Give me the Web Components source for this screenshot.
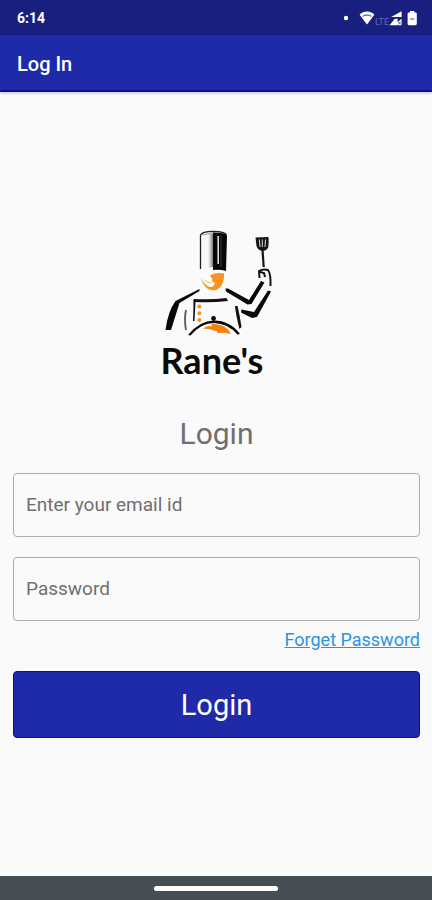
<!DOCTYPE html>
<html lang="en">
<head>
<meta charset="utf-8">
<meta name="viewport" content="width=device-width, initial-scale=1">
<title>Log In</title>
<style>
  html, body {
    margin: 0;
    height: 100%;
  }

  body {
    font-family: Roboto, "Liberation Sans", sans-serif;
    background: #fafafa;
    --primary: #1f2aa8;
    --primary-dark: #191f7e;
    --muted: #6f6f6f;
  }
</style>
</head>
<body>
<login-page></login-page>

<script>
class StatusBar extends HTMLElement {
  constructor() {
    super();
    this.attachShadow({ mode: 'open' });
    this.shadowRoot.innerHTML = `<style>
      :host {
        display: flex;
        align-items: center;
        justify-content: space-between;
        height: 35px;
        padding: 0 13px 0 17px;
        background: var(--primary-dark);
        color: #fff;
        font-size: 14px;
        font-weight: 700;
      }

      .icons {
        display: flex;
        align-items: center;
      }

      .lte {
        align-self: flex-end;
        font-size: 9px;
        font-weight: 400;
        line-height: 8px;
        color: #6468ad;
      }

      svg {
        display: block;
        fill: #fff;
      }
    </style>
    <span><slot></slot></span>
    <div class="icons">
      <svg width="16" height="16" viewBox="0 0 16 16"><circle cx="3" cy="8" r="2.2"/></svg>
      <svg width="16" height="16" viewBox="0 0 16 16">
        <path d="M0.6 4.8C4.8 0.4 11.2 0.4 15.4 4.8L8 14.4z"/>
        <path d="M3.5 6.4C6 4.6 10 4.6 12.5 6.4" fill="none" stroke="#191f7e" stroke-width="0.9"/>
      </svg>
      <span class="lte">LTE</span>
      <svg width="16" height="16" viewBox="0 0 16 16">
        <path d="M12.600 1.200V7H2.200z"/>
        <path d="M5.800 8.800H8.600V11.800L10.400 10.800L12.600 8.600V15.200H0.600z"/>
        <path d="M9 11.500L12 14.500M12 11.500L9 14.500" stroke="#191f7e" stroke-width="0.7" fill="none"/>
      </svg>
      <svg width="14" height="16" viewBox="0 0 14 16">
        <path d="M5 1h4.4v1.600h1.200q1.200 0 1.200 1.200v10q0 1.400-1.400 1.400H4q-1.400 0-1.400-1.400v-10q0-1.200 1.200-1.200H5z"/>
        <path d="M5 9h4.400" stroke="#a5a8d0" stroke-width="2.200"/>
      </svg>
    </div>`;
  }
}
customElements.define('status-bar', StatusBar);


class AppBar extends HTMLElement {
  constructor() {
    super();
    this.attachShadow({ mode: 'open' });
    this.shadowRoot.innerHTML = `<style>
      :host {
        display: flex;
        align-items: center;
        height: 57px;
        padding: 0 17px;
        background: var(--primary);
        box-shadow: inset 0 -2px #0a0f96, 0 1px 3px rgba(0,0,0,0.25);
        color: #fff;
      }

      h1 {
        margin: 0;
        font-size: 20px;
        font-weight: 500;
        line-height: 24px;
      }
    </style>
    <h1><slot></slot></h1>`;
  }
}
customElements.define('app-bar', AppBar);


class BrandLogo extends HTMLElement {
  constructor() {
    super();
    this.attachShadow({ mode: 'open' });
    this.shadowRoot.innerHTML = `<style>
      :host {
        display: block;
        width: 112px;
      }

      svg {
        display: block;
        width: 100%;
      }

      .name {
        color: #0b0b0b;
        font-family: Lato, "Liberation Sans", sans-serif;
        font-size: 36px;
        font-weight: 700;
        line-height: 46px;
        white-space: nowrap;
      }
    </style>
    <svg viewBox="161 229 112 107" aria-hidden="true">
      <defs>
        <linearGradient id="fold">
          <stop offset="0" stop-color="#999" stop-opacity="0"/>
          <stop offset="1" stop-color="#777"/>
        </linearGradient>
      </defs>
      <!-- hat -->
      <path d="M200.5 268V234Q202 230.6 213 230.4Q225 230.6 226.5 234" fill="none" stroke="#222" stroke-width="1.3"/>
      <path d="M202 234Q213 232 214 232" fill="none" stroke="#888" stroke-width="0.8"/>
      <path d="M208 233H213V266L208 267z" fill="url(#fold)"/>
      <path d="M213 231.5Q225 231.5 227 234.5L226 270Q220 268 213 269z" fill="#080808"/>
      <path d="M218.2 235V263" stroke="#ddd" stroke-width="1.6"/>
      <path d="M221 234V266" stroke="#555" stroke-width="0.7"/>
      <!-- face -->
      <path d="M210.5 274Q217 271 224 272.5Q224.5 281 220 286.5Q215 291 208 288Q202.5 284 201 277Q204.5 284 209.5 286Q214 286.5 215 282Q211 281 212.5 277.5Q210 276.5 210.5 274z" fill="#f7931e"/>
      <path d="M205 279Q207 282 211 282" fill="none" stroke="#f9b25c" stroke-width="1"/>
      <!-- spatula and hand -->
      <path d="M255.5 236.5L268.5 236Q269 243 268 247Q266 250 262 250Q257.5 249 256.5 245z" fill="#151515"/>
      <path d="M259.3 238.5L260 246M262.3 238.5V246M265.5 238.5L265 246" stroke="#ddd" stroke-width="1"/>
      <path d="M262.5 249L263.7 266" stroke="#151515" stroke-width="2.2"/>
      <path d="M259.5 277L259 270Q263 267.5 268 269Q271 273 270.5 285M260 271L264 272L265 276" fill="none" stroke="#111" stroke-width="2"/>
      <!-- arms -->
      <path d="M225.5 287.5L228 287.5L249 299L261 280L264.5 281.5L251.500 303L247.500 303.5L226 290.500z" fill="#080808"/>
      <path d="M268 289.5L271 290.5L257 316L252 317L241 311.5L241.5 308.5L254 311z" fill="#080808"/>
      <path d="M199.5 288L199.5 290L179.5 302L171 329H165.5Q168 310 175.5 300z" fill="#080808"/>
      <!-- jacket -->
      <path d="M186 309Q184 318 186 329" fill="none" stroke="#555" stroke-width="1.8"/>
      <path d="M193 320Q193.5 308 193.5 298Q212 299 226.500 297L228 300Q211 302 195.5 301L194.5 320z" fill="#111"/>
      <path d="M235 305L237.5 305Q240 315 241.5 326L239.5 328Q236 315 235 305z" fill="#111"/>
      <g fill="#f7931e">
        <circle cx="199.3" cy="305.5" r="2"/>
        <circle cx="199.3" cy="312.3" r="2"/>
        <circle cx="199.3" cy="319" r="2"/>
      </g>
      <!-- serving dome -->
      <path d="M203 328Q207 323.5 212 325.5Q210 322 215 323Q227 324 231 333Q221 331 217 332.500Q219 330 214 329.5Q208 327 203 328z" fill="#f5820a"/>
      <path d="M188 334Q200 319.5 214 319.5Q230 319.5 240 333L237.5 333.5Q228 322.500 214 322Q201 322 190.500 334.500z" fill="#080808"/>
      <circle cx="213.5" cy="317.5" r="2.4" fill="#080808"/>
    </svg>
    <div class="name"><slot></slot></div>`;
  }
}
customElements.define('brand-logo', BrandLogo);


class TextField extends HTMLElement {
  constructor() {
    super();
    this.attachShadow({ mode: 'open' });
  }

  connectedCallback() {
    const label = this.getAttribute('label');
    const type = this.getAttribute('type') || 'text';
    this.shadowRoot.innerHTML = `<style>
      :host {
        display: grid;
        align-items: center;
      }

      /* label and input share one cell, the label gives way to typed text */
      label, input {
        grid-area: 1 / 1;
      }

      label {
        padding: 0 13px;
        color: var(--muted);
        font-size: 19px;
        line-height: 24px;
        pointer-events: none;
      }

      input {
        box-sizing: border-box;
        width: 100%;
        height: 64px;
        padding: 0 12px;
        border: 1px solid #adadad;
        border-radius: 4px;
        background: transparent;
        color: #222;
        font-family: inherit;
        font-size: 19px;
      }

      input:focus {
        outline: 2px solid var(--primary);
      }

      :host(.filled) label {
        opacity: 0;
      }
    </style>
    <label for="field">${label}</label>
    <input id="field" type="${type}">`;

    this.input = this.shadowRoot.querySelector('input');
    this.input.addEventListener('input', () => {
      this.classList.toggle('filled', this.input.value !== '');
    });
  }
}
customElements.define('text-field', TextField);


class PrimaryButton extends HTMLElement {
  constructor() {
    super();
    this.attachShadow({ mode: 'open' });
    this.shadowRoot.innerHTML = `<style>
      :host {
        display: block;
      }

      button {
        display: block;
        width: 100%;
        height: 67px;
        border: 1px solid #0a0f9c;
        border-radius: 4px;
        background: var(--primary);
        color: #fff;
        font-family: inherit;
        font-size: 29px;
        cursor: pointer;
      }
    </style>
    <button type="button"><slot></slot></button>`;
  }
}
customElements.define('primary-button', PrimaryButton);


class LoginForm extends HTMLElement {
  constructor() {
    super();
    this.attachShadow({ mode: 'open' });
    this.shadowRoot.innerHTML = `<style>
      :host {
        display: block;
        padding: 0 12px 0 13px;
      }

      brand-logo {
        margin: 0 auto;
      }

      h2 {
        margin: 32px 0 20px;
        color: var(--muted);
        font-size: 30px;
        font-weight: 400;
        line-height: 38px;
        text-align: center;
      }

      form {
        display: flex;
        flex-direction: column;
      }

      text-field + text-field {
        margin-top: 20px;
      }

      a {
        align-self: flex-end;
        margin: 8px 0 20px;
        color: #2c93e4;
        font-size: 18px;
        line-height: 22px;
      }
    </style>
    <brand-logo>Rane's</brand-logo>
    <h2>Login</h2>
    <form>
      <text-field label="Enter your email id" type="email"></text-field>
      <text-field label="Password" type="password"></text-field>
      <a href="#forget">Forget Password</a>
      <primary-button>Login</primary-button>
    </form>`;
  }
}
customElements.define('login-form', LoginForm);


class NavBar extends HTMLElement {
  constructor() {
    super();
    this.attachShadow({ mode: 'open' });
    this.shadowRoot.innerHTML = `<style>
      :host {
        display: flex;
        align-items: center;
        justify-content: center;
        height: 24px;
        background: #454e52;
      }

      .handle {
        width: 124px;
        height: 5px;
        border-radius: 3px;
        background: #fff;
      }
    </style>
    <div class="handle"></div>`;
  }
}
customElements.define('nav-bar', NavBar);


class LoginPage extends HTMLElement {
  constructor() {
    super();
    this.attachShadow({ mode: 'open' });
    this.shadowRoot.innerHTML = `<style>
      :host {
        display: flex;
        flex-direction: column;
        min-height: 100vh;
      }

      main {
        flex: 1;
        display: flex;
        flex-direction: column;
        justify-content: center;
      }
    </style>
    <status-bar>6:14</status-bar>
    <app-bar>Log In</app-bar>
    <main>
      <login-form></login-form>
    </main>
    <nav-bar></nav-bar>`;
  }
}
customElements.define('login-page', LoginPage);
</script>
</body>
</html>
